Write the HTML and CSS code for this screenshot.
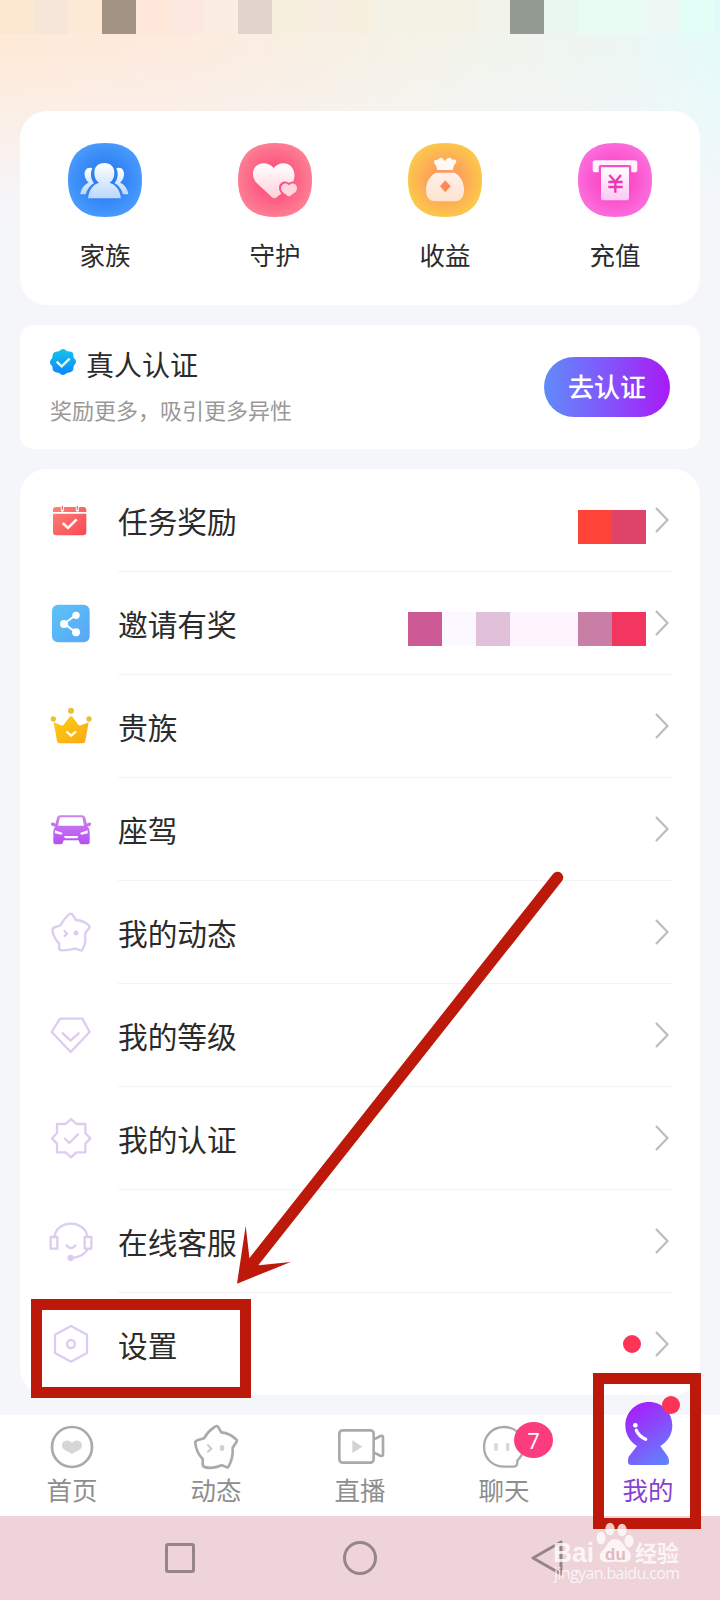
FILE: index.html
```html
<!DOCTYPE html>
<html lang="zh-CN">
<head>
<meta charset="utf-8">
<title>我的</title>
<link rel="stylesheet" href="styles.css">
</head>
<body>
<svg class="defs" width="0" height="0">
  <defs>
    <radialGradient id="gBlue"><stop offset="0" stop-color="#2377ee"/><stop offset=".6" stop-color="#3688f6"/><stop offset="1" stop-color="#4799fd"/></radialGradient>
    <radialGradient id="gPink"><stop offset="0" stop-color="#fb4877"/><stop offset=".5" stop-color="#fd5c83"/><stop offset="1" stop-color="#fd7d93"/></radialGradient>
    <radialGradient id="gGold"><stop offset="0" stop-color="#fb9262"/><stop offset=".5" stop-color="#fca75a"/><stop offset="1" stop-color="#fcc64b"/></radialGradient>
    <radialGradient id="gMag"><stop offset="0" stop-color="#f840c0"/><stop offset=".5" stop-color="#fb4fcb"/><stop offset="1" stop-color="#fb6cdb"/></radialGradient>
    <linearGradient id="wBlue" x2="0" y2="1"><stop offset="0" stop-color="#fff"/><stop offset="1" stop-color="#bcd8fc"/></linearGradient>
    <linearGradient id="wPink" x2="0" y2="1"><stop offset="0" stop-color="#fff"/><stop offset="1" stop-color="#ffd0dc"/></linearGradient>
    <linearGradient id="wGold" x2="0" y2="1"><stop offset="0" stop-color="#fff0ea"/><stop offset="1" stop-color="#ffe3cf"/></linearGradient>
    <linearGradient id="wMag" x2="0" y2="1"><stop offset="0" stop-color="#fff"/><stop offset="1" stop-color="#fdc8f3"/></linearGradient>
    <linearGradient id="badge" x2="0" y2="1"><stop offset="0" stop-color="#14c4e8"/><stop offset="1" stop-color="#0b86ff"/></linearGradient>
    <linearGradient id="cal" x2="1" y2="1"><stop offset="0" stop-color="#fb8378"/><stop offset="1" stop-color="#f94853"/></linearGradient>
    <linearGradient id="share" x2="1" y2="1"><stop offset="0" stop-color="#5cc4f8"/><stop offset="1" stop-color="#5aa5f6"/></linearGradient>
    <linearGradient id="crown" x2="1" y2="1"><stop offset="0" stop-color="#fdd00a"/><stop offset="1" stop-color="#fba61c"/></linearGradient>
    <linearGradient id="car" x2="0" y2="1"><stop offset="0" stop-color="#cf86e8"/><stop offset="1" stop-color="#b44ef8"/></linearGradient>
    <linearGradient id="me" x1=".3" y1="0" x2=".8" y2="1"><stop offset="0" stop-color="#a61ffb"/><stop offset="1" stop-color="#6183fd"/></linearGradient>
    <symbol id="chev" viewBox="0 0 14 26"><path d="M1 1 12.500 13 1 25" fill="none" stroke="#bdbdbd" stroke-width="2.300"/></symbol>
  </defs>
</svg>

<div class="mosaic-top">
  <i class="t0"></i><i class="t1"></i><i class="t2"></i><i class="t3"></i><i class="t4"></i><i class="t5"></i><i class="t6"></i><i class="t7"></i><i class="t8"></i><i class="t9"></i><i class="t8"></i><i class="t11"></i><i class="t11"></i><i class="t11"></i><i class="t14"></i><i class="t15"></i><i class="t16"></i><i class="t17"></i><i class="t17"></i><i class="t19"></i><i class="t20"></i><i class="t21"></i>
</div>

<section class="card shortcuts">
  <div class="shortcut">
    <svg class="big" viewBox="204 128 222 222">
      <path d="M315 128C388 128 426 166 426 239S388 350 315 350 204 312 204 239 242 128 315 128Z" fill="url(#gBlue)"/>
      <g fill="url(#wBlue)">
        <path d="M274 203C260 200 252 212 254 225 255 235 260 242 266 247 252 253 243 265 241 282H257C261 267 270 255 282 249 272 235 270 219 277 204Z"/>
        <path d="M352 203C366 200 374 212 372 225 371 235 366 242 360 247 374 253 383 265 385 282H369C365 267 356 255 344 249 354 235 356 219 349 204Z"/>
        <path d="M313 188C332 188 343 200 343 217 343 231 338 241 329 247 348 253 360 269 363 294H264C267 269 278 253 297 247 288 241 283 231 283 217 283 200 294 188 313 188Z"/>
      </g>
    </svg>
    <span>家族</span>
  </div>
  <div class="shortcut">
    <svg class="big" viewBox="714 128 222 222">
      <path d="M825 128C898 128 936 166 936 239S898 350 825 350 714 312 714 239 752 128 825 128Z" fill="url(#gPink)"/>
      <path d="M821 203C839 180 879 185 883 219 884 229 883 236 880 243L866 247C852 239 837 247 837 263 837 271 841 276 844 280L828 292Q822 297 815 290L774 252C763 242 758 231 759 217 762 187 801 179 821 203Z" fill="url(#wPink)"/>
      <path d="M867 255C876 245 891 250 891 264 891 275 880 280 872 286Q867 289 862 286C854 280 843 275 843 264 843 250 859 245 867 255Z" fill="#ffd5df"/>
    </svg>
    <span>守护</span>
  </div>
  <div class="shortcut">
    <svg class="big" viewBox="144 128 222 222">
      <path d="M255 128C328 128 366 166 366 239S328 350 255 350 144 312 144 239 182 128 255 128Z" fill="url(#gGold)"/>
      <path d="M232 209Q229 194 222 187 220 177 231 179L242 172Q250 172 254 183L260 175Q271 169 277 178 292 176 288 187 280 194 279 209Z" fill="#fff8f4"/>
      <path d="M227 217H284C303 228 312 247 312 270 312 294 300 303 282 303H228C210 303 198 294 198 270 198 247 208 228 227 217Z" fill="url(#wGold)"/>
      <path d="M256 240 272 258 256 276 240 258Z" fill="#fb8a58"/>
    </svg>
    <span>收益</span>
  </div>
  <div class="shortcut">
    <svg class="big" viewBox="654 128 222 222">
      <path d="M765 128C838 128 876 166 876 239S838 350 765 350 654 312 654 239 692 128 765 128Z" fill="url(#gMag)"/>
      <path d="M706 180H824Q832 180 832 188V208Q832 216 824 216H814V200Q814 194 808 194H722Q716 194 716 200V216H706Q698 216 698 208V188Q698 180 706 180Z" fill="#fff3fc"/>
      <path d="M723 201H807V292Q807 300 799 300H731Q723 300 723 292Z" fill="url(#wMag)"/>
      <path d="M748 224 766 244 783 224M745 245H788M745 260H788M766 243V277" fill="none" stroke="#ee36b6" stroke-width="7"/>
    </svg>
    <span>充值</span>
  </div>
</section>

<section class="card verify">
  <div class="verify-text">
    <div class="verify-title">
      <svg width="26" height="26" viewBox="150 117 78 78"><path d="M181 121Q189 113 197 121L202 124 214 125Q220 126 220 134L221 143Q229 150 228 156 227 162 221 168L220 178Q219 186 211 187L203 188 197 191Q189 199 181 191L175 188 167 187Q159 186 158 178L157 169Q149 162 150 156 150 150 157 144L158 134Q159 126 167 125L176 124Z" fill="url(#badge)"/><path d="M170 155 185 169 209 146" fill="none" stroke="#d8fdff" stroke-width="7"/></svg>
      <span>真人认证</span>
    </div>
    <p class="verify-sub">奖励更多，吸引更多异性</p>
  </div>
  <a class="verify-btn">去认证</a>
</section>

<section class="card menu">
  <div class="row">
    <svg class="ico" viewBox="147 566 132 132"><path d="M168 590H250Q259 590 259 599V605H159V599Q159 590 168 590ZM159 610H259V665Q259 675 249 675H169Q159 675 159 665Z" fill="url(#cal)"/><path d="M187 600V590M232 600V590" stroke="#fff" stroke-width="9" stroke-linecap="round"/><path d="M187 597V588M232 597V588" stroke="#f9736e" stroke-width="4" stroke-linecap="round"/><path d="M188 638 204 653 230 627" fill="none" stroke="#fff3f0" stroke-width="8"/></svg>
    <div class="row-body"><span class="label">任务奖励</span><span class="pixels p1"><i class="a"></i><i class="b"></i></span><svg class="chev"><use href="#chev"/></svg></div>
  </div>
  <div class="row">
    <svg class="ico" viewBox="87 94 132 132"><rect x="96" y="102" width="113" height="113" rx="18" fill="url(#share)"/><path d="M168 133 132 159 168 185" fill="none" stroke="#fff" stroke-width="6"/><g fill="#fff"><circle cx="168" cy="134" r="11"/><circle cx="132" cy="160" r="12"/><circle cx="168" cy="185" r="12"/></g></svg>
    <div class="row-body"><span class="label">邀请有奖</span><span class="pixels p2"><i class="c"></i><i class="d"></i><i class="e"></i><i class="f"></i><i class="f"></i><i class="g"></i><i class="h"></i></span><svg class="chev"><use href="#chev"/></svg></div>
  </div>
  <div class="row">
    <svg class="ico" viewBox="87 404 132 132"><path d="M101 456 123 465Q128 467 131 463L148 441Q153 435 158 441L175 463Q178 467 183 465L206 456 196 512Q195 519 188 519H119Q112 519 111 512Z" fill="url(#crown)"/><g fill="#eac036"><circle cx="153" cy="421" r="9"/><circle cx="100" cy="446" r="8"/><circle cx="207" cy="446" r="8"/></g><path d="M139 483 153 496 168 483" fill="none" stroke="#fff8dc" stroke-width="7"/></svg>
    <div class="row-body"><span class="label">贵族</span><svg class="chev"><use href="#chev"/></svg></div>
  </div>
  <div class="row">
    <svg class="ico" viewBox="87 713 132 132"><path d="M121 735H186Q194 735 196 742L201 762 203 757H213V763Q209 769 202 768 209 775 209 785V816Q209 822 203 822H185Q179 822 178 816L176 810H131L129 816Q128 822 122 822H106Q100 822 100 816V785Q100 775 106 768 96 769 93 763V757H104L106 762 111 742Q113 735 121 735Z" fill="url(#car)"/><path d="M120 741H187L192 766H114Z" fill="#fff"/><path d="M105 780 128 788 124 793 105 789ZM203 780 180 788 184 793 203 789ZM132 797H175L172 804H135Z" fill="#fff"/></svg>
    <div class="row-body"><span class="label">座驾</span><svg class="chev"><use href="#chev"/></svg></div>
  </div>
  <div class="row">
    <svg class="ico line" viewBox="87 92 132 132"><path d="M145 104Q153 95 159 106L168 119Q190 121 204 133 211 138 207 144L196 158Q195 170 196 179 196 195 187 208 183 213 179 209L165 205Q142 211 125 210 117 209 117 202L118 190Q101 174 98 152 96 144 103 141L121 135Q131 117 145 104Z"/><path d="M132 150 141 160 132 169"/><circle cx="168" cy="158" r="4"/></svg>
    <div class="row-body"><span class="label">我的动态</span><svg class="chev"><use href="#chev"/></svg></div>
  </div>
  <div class="row">
    <svg class="ico line" viewBox="87 401 132 132"><path d="M120 415H187L209 455 152 515 95 455Z"/><path d="M126 457 152 481 178 457"/></svg>
    <div class="row-body"><span class="label">我的等级</span><svg class="chev"><use href="#chev"/></svg></div>
  </div>
  <div class="row">
    <svg class="ico line" viewBox="87 710 132 132"><path d="M153 716 169 731H196V758L211 774 196 790V816H169L153 831 137 816H111V790L96 774 111 758V731H137Z"/><path d="M133 773 148 788 176 760"/></svg>
    <div class="row-body"><span class="label">我的认证</span><svg class="chev"><use href="#chev"/></svg></div>
  </div>
  <div class="row">
    <svg class="ico line" viewBox="87 179 132 132"><path d="M104 228C111 177 193 177 202 228M92 230H112V265H92ZM194 230H214V265H194ZM203 267Q192 288 158 293M138 253Q153 274 168 253"/><circle cx="152" cy="293" r="6" fill="#dcc8ef"/></svg>
    <div class="row-body"><span class="label">在线客服</span><svg class="chev"><use href="#chev"/></svg></div>
  </div>
  <div class="row">
    <svg class="ico line" viewBox="87 488 132 132"><path d="M153 497 201 523V578L153 604 105 578V523Z"/><circle cx="153" cy="551" r="12"/></svg>
    <div class="row-body last"><span class="label">设置</span><span class="dot"></span><svg class="chev"><use href="#chev"/></svg></div>
  </div>
</section>

<nav class="tabs">
  <div class="tab">
    <svg viewBox="120 30 192 198"><circle cx="216" cy="171" r="60" fill="none" stroke="#aaa" stroke-width="8"/><path d="M216 159C227 145 248 152 246 169 245 180 228 184 216 192 204 184 187 180 186 169 184 152 205 145 216 159Z" fill="#d6d6d6"/></svg>
    <span>首页</span>
  </div>
  <div class="tab">
    <svg viewBox="552 30 192 198"><path d="M641 113Q652 103 657 115L664 127Q690 130 707 147 714 151 708 158L698 173Q700 204 686 229 683 235 677 230L665 226Q640 237 617 232 609 231 608 223V207Q590 189 586 161 584 153 592 151L612 145Q623 125 641 113Z" fill="none" stroke="#aaa" stroke-width="8" stroke-linejoin="round"/><path d="M622 164 634 176 622 187" fill="none" stroke="#c9c9c9" stroke-width="6"/><ellipse cx="666" cy="174" rx="7" ry="9" fill="#d0d0d0"/></svg>
    <span>动态</span>
  </div>
  <div class="tab">
    <svg viewBox="984 30 192 198"><rect x="1018" y="121" width="103" height="97" rx="10" fill="none" stroke="#aaa" stroke-width="8"/><path d="M1121 149 1141 138Q1149 135 1149 143V193Q1149 200 1141 197L1121 187" fill="none" stroke="#aaa" stroke-width="8"/><path d="M1057 151 1087 170 1057 189Z" fill="#d2d2d2"/></svg>
    <span>直播</span>
  </div>
  <div class="tab">
    <svg viewBox="216 300 192 198"><path d="M352 482Q353 500 342 500H313C277 500 252 474 252 441S277 381 312 381 372 407 372 440Q371 463 352 482Z" fill="none" stroke="#aaa" stroke-width="7"/><path d="M283 430H293V452H283ZM318 430H328V452H318Z" fill="#d6d6d6"/></svg>
    <span>聊天</span>
    <b class="count">7</b>
  </div>
  <div class="tab active">
    <svg viewBox="648 300 192 198"><path d="M747 306C787 306 817 337 817 377 817 402 803 425 781 438L804 470Q813 494 798 495H693Q679 494 686 470L711 438C690 425 676 402 676 377 676 337 707 306 747 306Z" fill="url(#me)"/><circle cx="706" cy="376" r="7" fill="#fff"/><path d="M709 391Q717 409 737 418" fill="none" stroke="#fff" stroke-width="10" stroke-linecap="round"/></svg>
    <span>我的</span>
    <b class="mini-dot"></b>
  </div>
</nav>

<footer class="sysnav">
  <div><svg width="32" height="36"><rect x="2.500" y="4.500" width="27" height="27" rx="1.500"/></svg></div>
  <div><svg width="36" height="36"><circle cx="18" cy="18" r="15.500"/></svg></div>
  <div><svg width="46" height="36"><path d="M16 18 44 2V34Z" stroke-linejoin="round"/></svg></div>
</footer>

<svg class="overlay" width="720" height="1600" viewBox="0 0 720 1600">
  <g fill="none" stroke="#bd190b" stroke-width="11"><rect x="36.500" y="1304.500" width="209" height="88"/><rect x="598.500" y="1378.500" width="97" height="145"/></g>
  <path d="M557.500 877.500 252 1264" stroke="#bd190b" stroke-width="11.500" stroke-linecap="round"/>
  <path d="M237 1283.700 245.700 1225.700 249.500 1258.700 259 1265.300 290.700 1262Z" fill="#bd190b"/>
  <g class="mark" fill="#fff">
    <text x="553" y="1562" class="m-bai" textLength="41" lengthAdjust="spacingAndGlyphs">Bai</text>
    <path d="M615 1539C622 1539 624 1547 629 1551 634 1557 629 1564 621 1562Q615 1561 609 1562C601 1564 597 1557 602 1551 607 1547 608 1539 615 1539Z"/>
    <ellipse cx="601" cy="1538" rx="4.500" ry="6.300"/><ellipse cx="610" cy="1529" rx="4.600" ry="6.300"/><ellipse cx="622" cy="1530" rx="4.600" ry="6.300"/><ellipse cx="629" cy="1541" rx="4.500" ry="6.300"/>
    <text x="635" y="1561" class="m-cn">经验</text>
    <text x="554" y="1579" class="m-url" textLength="126">jingyan.baidu.com</text>
  </g>
  <text x="605" y="1560" class="m-du">du</text>
</svg>
</body>
</html>
```

FILE: styles.css
```css
* { box-sizing: border-box; }
body {
  position: relative;
  margin: 0;
  width: 720px;
  height: 1600px;
  overflow: hidden;
  display: flex;
  flex-direction: column;
  font-family: "Noto Sans CJK SC", sans-serif;
  color: #2b2b2b;
  background:
    linear-gradient(to bottom, rgba(245, 246, 250, 0) 50px, #f5f6fa 215px) 0 0 / 100% 216px no-repeat,
    linear-gradient(to right, #ffead8 0, #fdebdf 180px, #f8f0e4 330px, #f2f4ec 480px, #edf6f3 620px, #e4fbfa 720px) 0 0 / 100% 215px no-repeat,
    #f5f6fa;
}
svg { display: block; flex: none; }
.defs { position: absolute; }

.mosaic-top { display: flex; height: 34px; overflow: hidden; flex: none; }
.mosaic-top i { flex: none; width: 34px; }
.t0 { background: #fce8d0; } .t1 { background: #f5e6d9; } .t2 { background: #fdead6; }
.t3 { background: #a39382; } .t4 { background: #ffe8da; } .t5 { background: #fce8de; }
.t6 { background: #fbede2; } .t7 { background: #e2d4cc; } .t8 { background: #f7f0de; }
.t9 { background: #f9eee2; } .t11 { background: #f2f3e5; } .t14 { background: #f2f4ea; }
.t15 { background: #949b92; } .t16 { background: #e9f7ef; } .t17 { background: #e8fcf3; }
.t19 { background: #eff7f5; } .t20 { background: #e2fff7; } .t21 { background: #e0fcf8; }

.card { flex: none; margin: 0 20px; background: #fff; }
.shortcuts { margin-top: 77px; height: 194px; border-radius: 27px; display: flex; padding-top: 32px; }
.shortcut { flex: 1; display: flex; flex-direction: column; align-items: center; font-size: 25.5px; line-height: 38px; gap: 18px; }
.big { width: 74px; height: 74px; }

.verify { margin-top: 20px; height: 124px; border-radius: 14px; display: flex; align-items: center; justify-content: space-between; padding: 0 30px; }
.verify-text { margin-top: -4px; }
.verify-title { display: flex; align-items: center; gap: 10px; font-size: 28px; line-height: 40px; }
.verify-title svg { margin-top: -4px; }
.verify-sub { margin: 8px 0 0; font-size: 22px; line-height: 34px; color: #999; }
.verify-btn { width: 126px; height: 60px; border-radius: 30px; background: linear-gradient(90deg, #5f8bfc, #8355fb 50%, #a81bf5); color: #fff; font-size: 26px; font-weight: 500; line-height: 58px; text-align: center; }

.menu { margin-top: 20px; height: 926px; border-radius: 27px; }
.row { display: flex; height: 103px; padding: 0 28px 0 29px; }
.ico { width: 44px; height: 44px; margin: 29.5px 25px 0 0; }
.row-body { flex: 1; display: flex; align-items: center; border-bottom: 1px solid #f3f3f5; padding-right: 3px; }
.row-body.last { border-color: transparent; }
.label { flex: 1; font-size: 29.7px; line-height: 44px; padding-top: 1px; }
.chev { width: 14px; height: 26px; }
.line { fill: none; stroke: #dccdf0; stroke-width: 7; stroke-linejoin: round; }
.pixels { display: flex; margin-right: 9px; }
.pixels i { width: 34px; height: 34px; }
.p1 { margin-top: 13px; } .p2 { margin-top: 11px; }
.a { background: #ff4339; } .b { background: #dd4468; } .c { background: #cd5a94; } .d { background: #fbf8ff; }
.e { background: #e1c1da; } .f { background: #fdf4fd; } .g { background: #c97ea6; } .h { background: #f2365f; }
.dot { width: 18px; height: 18px; border-radius: 50%; background: #fb3357; margin-right: 14px; }

.tabs { flex: none; margin-top: 20px; height: 101px; background: #fff; display: flex; }
.tab { position: relative; flex: 1; display: flex; flex-direction: column; align-items: center; font-size: 25.5px; line-height: 38px; color: #8e8e8e; }
.tab svg { width: 64px; height: 66px; margin-top: -15px; margin-bottom: 4px; overflow: visible; }
.active { color: #8a3fd0; }
.count { position: absolute; left: 82px; top: 7px; width: 39px; height: 36px; border-radius: 50%; background: #fb3d80; color: #fff; font: 22px/36px "Open Sans", sans-serif; text-align: center; }
.mini-dot { position: absolute; left: 86px; top: -19px; width: 18px; height: 18px; border-radius: 50%; background: #fb3357; }

.sysnav { flex: none; height: 84px; padding: 0 90px; background: #eed3d8; display: flex; }
.sysnav div { flex: 1; display: flex; justify-content: center; padding-top: 24px; }
.sysnav svg { fill: none; stroke: #958587; stroke-width: 3; }

.overlay { position: absolute; left: 0; top: 0; }
.mark { opacity: .78; }
.m-bai { font: bold 28px "Liberation Sans", sans-serif; }
.m-cn { font: bold 22px "Noto Sans CJK SC", sans-serif; }
.m-url { font: 16px "Open Sans", sans-serif; }
.m-du { font: bold 17px "Liberation Sans", sans-serif; fill: #e2b9c0; }
```
